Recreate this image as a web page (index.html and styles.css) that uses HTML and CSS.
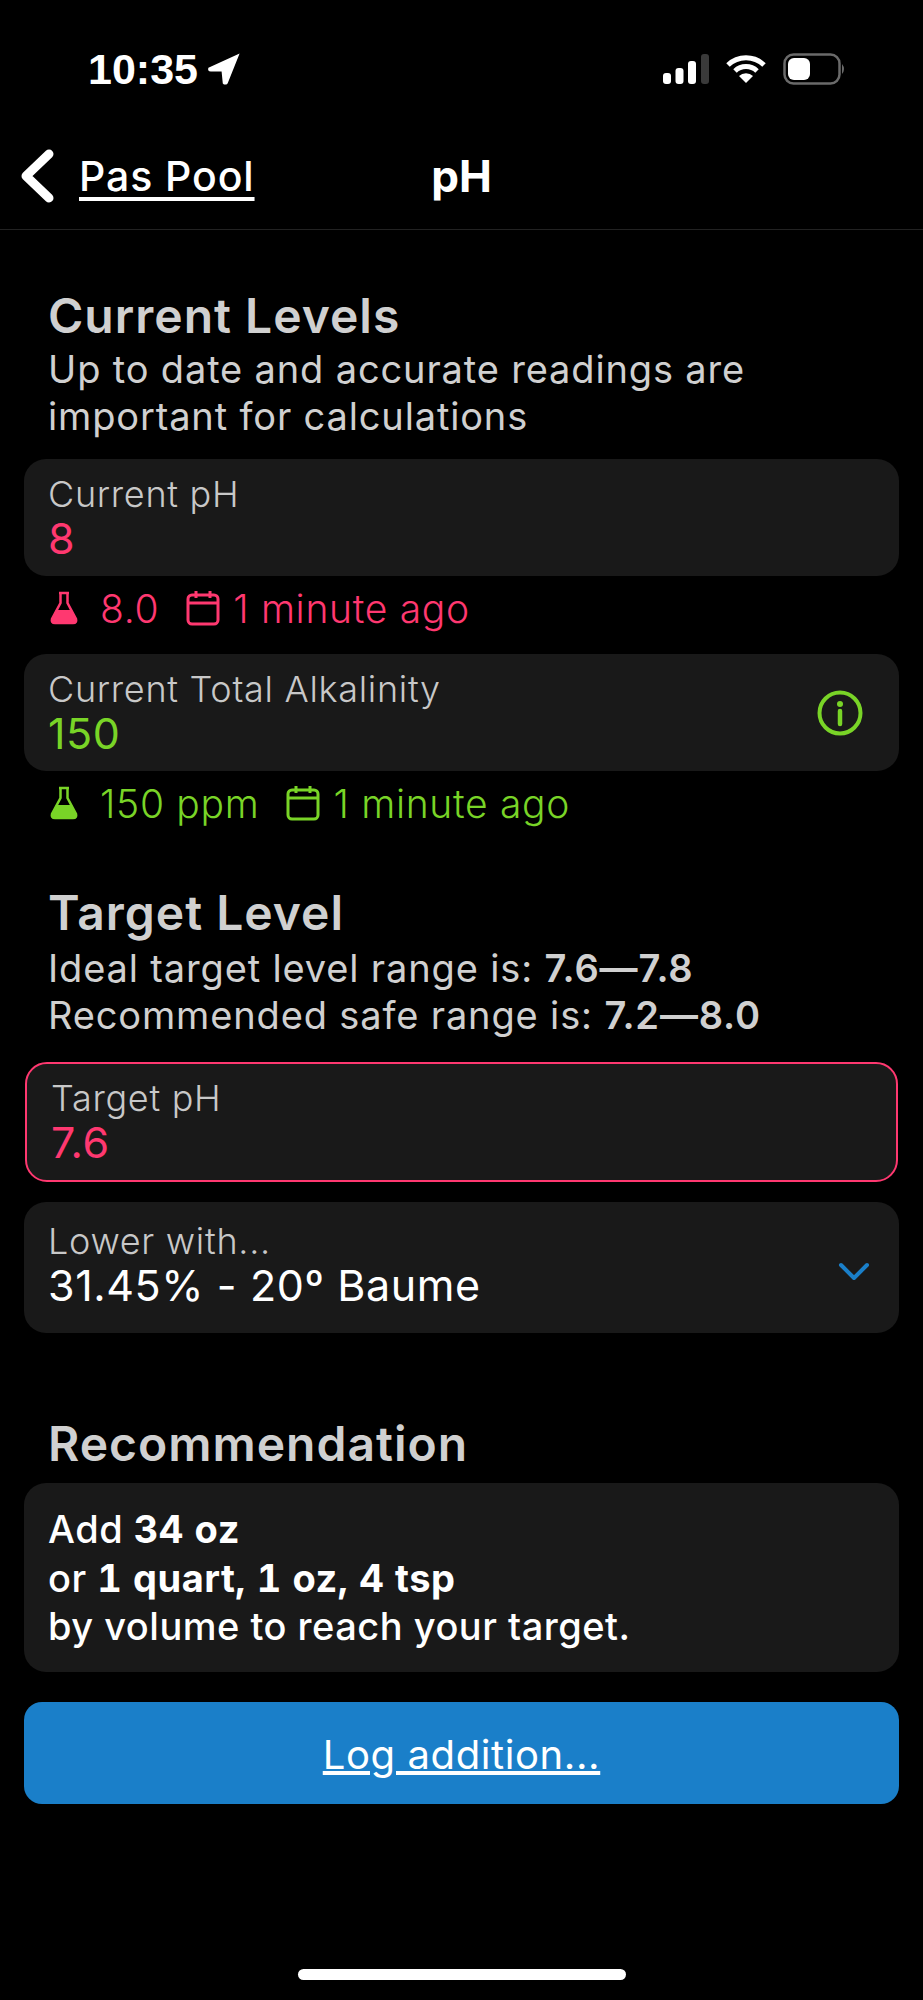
FILE: index.html
```html
<!DOCTYPE html>
<html lang="en">
<head>
    <meta charset="UTF-8">
    <meta name="viewport" content="width=device-width, initial-scale=1.0">
    <title>pH</title>
    <link rel="stylesheet" href="styles.css">
</head>
<body>
<div class="pantalla">

    <!-- Status bar -->
    <div class="status">
        <div class="hora">
            <span>10:35</span>
            <svg class="flecha" viewBox="0 0 30 30"><path d="M28 2 L2 14 Q1 17 4 17 L13 17 L14 27 Q16 29 18 27 Z" fill="#fff"/></svg>
        </div>
        <div class="status-iconos">
            <svg width="46" height="30" viewBox="0 0 46 30">
                <rect x="0" y="19" width="8" height="11" rx="3" fill="#fff"/>
                <rect x="12.500" y="14" width="8" height="16" rx="3" fill="#fff"/>
                <rect x="25" y="7" width="8" height="23" rx="3" fill="#fff"/>
                <rect x="38" y="0" width="8" height="30" rx="3" fill="#3a3a3a"/>
            </svg>
            <svg width="40" height="30" viewBox="0 0 40 30">
                <path d="M2 11 A26 26 0 0 1 38 11" fill="none" stroke="#fff" stroke-width="5"/>
                <path d="M9 17 A16 16 0 0 1 31 17" fill="none" stroke="#fff" stroke-width="5"/>
                <path d="M13 22 L20 29 L27 22 A10 10 0 0 0 13 22 Z" fill="#fff"/>
            </svg>
            <svg width="63" height="32" viewBox="0 0 63 32">
                <rect x="1.500" y="1.500" width="55" height="29" rx="9" fill="none" stroke="#6a6a6a" stroke-width="2.500"/>
                <rect x="5" y="5" width="22" height="22" rx="6" fill="#fff"/>
                <path d="M59 11 Q63 16 59 21 Z" fill="#6a6a6a"/>
            </svg>
        </div>
    </div>

    <!-- Nav -->
    <div class="nav">
        <div class="nav-atras">
            <svg class="chevron-atras" viewBox="0 0 36 54"><path d="M29 5 L6 27 L29 49" fill="none" stroke="#fff" stroke-width="9" stroke-linecap="round" stroke-linejoin="round"/></svg>
            <a class="nav-link">Pas Pool</a>
        </div>
        <div class="nav-titulo">pH</div>
    </div>

    <div class="contenido">
        <h2>Current Levels</h2>
        <p class="texto">Up to date and accurate readings are<br>important for calculations</p>

        <div class="tarjeta campo">
            <div>
                <div class="etiqueta">Current pH</div>
                <div class="valor rosa">8</div>
            </div>
        </div>
        <div class="meta rosa">
            <svg class="matraz" viewBox="0 0 30 34"><path d="M10 2 H20 M11.500 2 V12 L3 28 Q2 32 6 32 H24 Q28 32 27 28 L18.500 12 V2" fill="none" stroke="currentColor" stroke-width="2.500"/><path d="M7 19 H23 L27 28 Q28 32 24 32 H6 Q2 32 3 28 Z" fill="currentColor"/></svg>
            <span class="meta-dato">8.0</span>
            <svg class="calendario" viewBox="0 0 34 36"><rect x="2" y="5" width="30" height="29" rx="4" fill="none" stroke="currentColor" stroke-width="3"/><path d="M2 13 H32 M10 1 V8 M24 1 V8" fill="none" stroke="currentColor" stroke-width="3"/></svg>
            <span>1 minute ago</span>
        </div>

        <div class="tarjeta campo">
            <div>
                <div class="etiqueta">Current Total Alkalinity</div>
                <div class="valor verde">150</div>
            </div>
            <svg class="info verde" viewBox="0 0 46 46"><circle cx="23" cy="23" r="20.500" fill="none" stroke="currentColor" stroke-width="4"/><circle cx="23" cy="14" r="3" fill="currentColor"/><path d="M23 21 V34" stroke="currentColor" stroke-width="4.500" stroke-linecap="round"/></svg>
        </div>
        <div class="meta verde">
            <svg class="matraz" viewBox="0 0 30 34"><path d="M10 2 H20 M11.500 2 V12 L3 28 Q2 32 6 32 H24 Q28 32 27 28 L18.500 12 V2" fill="none" stroke="currentColor" stroke-width="2.500"/><path d="M7 19 H23 L27 28 Q28 32 24 32 H6 Q2 32 3 28 Z" fill="currentColor"/></svg>
            <span class="meta-dato">150 ppm</span>
            <svg class="calendario" viewBox="0 0 34 36"><rect x="2" y="5" width="30" height="29" rx="4" fill="none" stroke="currentColor" stroke-width="3"/><path d="M2 13 H32 M10 1 V8 M24 1 V8" fill="none" stroke="currentColor" stroke-width="3"/></svg>
            <span>1 minute ago</span>
        </div>

        <h2 class="titulo-objetivo">Target Level</h2>
        <p class="texto texto-objetivo">Ideal target level range is: <b>7.6—7.8</b><br>Recommended safe range is: <b>7.2—8.0</b></p>

        <div class="tarjeta campo objetivo">
            <div>
                <div class="etiqueta">Target pH</div>
                <div class="valor rosa">7.6</div>
            </div>
        </div>

        <div class="tarjeta campo selector">
            <div>
                <div class="etiqueta">Lower with...</div>
                <div class="valor blanco">31.45% - 20º Baume</div>
            </div>
            <svg class="chevron-abajo" viewBox="0 0 32 20"><path d="M3 3 L16 16 L29 3" fill="none" stroke="#1a7fc9" stroke-width="4" stroke-linecap="round" stroke-linejoin="round"/></svg>
        </div>

        <h2 class="titulo-recomendacion">Recommendation</h2>
        <div class="tarjeta recomendacion">
            Add <b>34 oz</b><br>
            or <b>1 quart, 1 oz, 4 tsp</b><br>
            by volume to reach your target.
        </div>

        <a class="boton">Log addition...</a>
    </div>

    <div class="home"></div>
</div>
</body>
</html>
```

FILE: styles.css
```css
* {
    box-sizing: border-box;
}
body {
    margin: 0;
    background-color: #000;
    color: #fff;
    font-family: Inter, "Noto Sans", sans-serif;
}
.pantalla {
    height: 2000px;
    display: flex;
    flex-direction: column;
}

/* Status bar */
.status {
    height: 116px;
    padding: 47px 77px 0 88px;
    display: flex;
    justify-content: space-between;
    align-items: flex-start;
}
.hora {
    display: flex;
    align-items: center;
    gap: 8px;
    font-family: "Liberation Sans", sans-serif;
    font-size: 43px;
    font-weight: bold;
    line-height: 44px;
}
.flecha {
    width: 36px;
    height: 36px;
}
.status-iconos {
    display: flex;
    align-items: center;
    gap: 17px;
    margin-top: 6px;
}

/* Nav */
.nav {
    height: 114px;
    border-bottom: 1px solid #222;
    display: flex;
    align-items: center;
    position: relative;
    padding-left: 20px;
    padding-top: 6px;
}
.nav-atras {
    display: flex;
    align-items: center;
    gap: 23px;
}
.chevron-atras {
    width: 36px;
    height: 54px;
}
.nav-link {
    font-size: 41px;
    font-weight: 500;
    letter-spacing: 0.900px;
    text-decoration: underline;
    text-underline-offset: 6px;
}
.nav-titulo {
    position: absolute;
    left: 0;
    right: 0;
    text-align: center;
    font-size: 44px;
    font-weight: 700;
}

.contenido {
    padding: 60px 24px 0 24px;
    display: flex;
    flex-direction: column;
}
h2 {
    margin: 0 0 0 24px;
    font-size: 48px;
    line-height: 52px;
    font-weight: 600;
    letter-spacing: 1px;
    color: #d0d0d0;
}
.texto {
    margin: 4px 0 0 24px;
    font-size: 38px;
    line-height: 47px;
    letter-spacing: 0.850px;
    color: #d0d0d0;
}
.texto b {
    font-weight: 600;
}
.texto-objetivo {
    margin-top: 6px;
}

.tarjeta {
    background-color: #191919;
    border-radius: 22px;
}
.campo {
    margin-top: 19px;
    padding: 0 23px 0 24px;
    height: 117px;
    display: flex;
    justify-content: space-between;
    align-items: center;
}
.etiqueta {
    font-size: 36px;
    line-height: 40px;
    font-weight: 300;
    letter-spacing: 0.700px;
    color: #c8c8c8;
}
.valor {
    font-size: 43px;
    line-height: 48px;
    font-weight: 400;
    letter-spacing: 0.600px;
}
.rosa {
    color: #ff3870;
}
.verde {
    color: #79d427;
}
.blanco {
    color: #fff;
}
.info {
    width: 46px;
    height: 46px;
    margin-right: 13px;
}

.meta {
    display: flex;
    align-items: center;
    height: 40px;
    margin: 12px 0 7px 24px;
    font-size: 39px;
    font-weight: 300;
    letter-spacing: 0.700px;
}
.matraz {
    width: 32px;
    height: 34px;
}
.meta-dato {
    margin-left: 20px;
    margin-right: 27px;
}
.calendario {
    width: 34px;
    height: 36px;
    margin-right: 13px;
}

.titulo-objetivo {
    margin-top: 57px;
}
.objetivo {
    margin: 23px 1px 0;
    height: 120px;
    border: 2px solid #ff3870;
}
.selector {
    margin-top: 20px;
    height: 131px;
    padding-bottom: 5px;
}
.chevron-abajo {
    width: 32px;
    height: 20px;
    margin-right: 6px;
    margin-top: 14px;
}

.titulo-recomendacion {
    margin-top: 85px;
}
.recomendacion {
    margin-top: 13px;
    height: 189px;
    padding: 22px 24px;
    font-size: 38px;
    line-height: 48.500px;
    font-weight: 500;
    letter-spacing: 0.500px;
}
.recomendacion b {
    font-weight: 700;
    font-variant-numeric: tabular-nums;
}

.boton {
    display: block;
    margin-top: 30px;
    height: 102px;
    line-height: 105px;
    background-color: #1a7fc9;
    border-radius: 18px;
    text-align: center;
    font-size: 40px;
    letter-spacing: 0.600px;
    text-decoration: underline;
}

.home {
    width: 328px;
    height: 11px;
    border-radius: 6px;
    background-color: #fff;
    margin: auto auto 20px;
}
```
